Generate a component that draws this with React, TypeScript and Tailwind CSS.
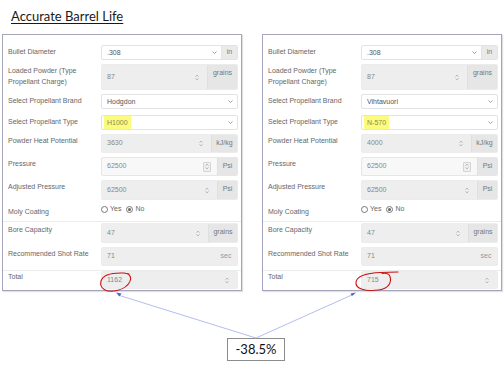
import type { ReactNode } from "react";

type Side = {
  brand: string;
  type: string;
  heat: string;
  total: string;
};

const left: Side = { brand: "Hodgdon", type: "H1000", heat: "3630", total: "1162" };
const right: Side = { brand: "Vihtavuori", type: "N-570", heat: "4000", total: "715" };

function Chevron() {
  return (
    <svg width="5" height="3" viewBox="0 0 5 3" className="shrink-0">
      <path d="M0.5 0.5 L2.5 2.5 L4.5 0.5" fill="none" stroke="#888" strokeWidth="0.8" />
    </svg>
  );
}

function Spinner({ boxed }: { boxed?: boolean }) {
  return (
    <span
      className={
        boxed
          ? "flex h-[10px] w-[8px] shrink-0 items-center justify-center rounded-[1px] border border-[#d4d4d4] bg-[#f0f0f0]"
          : "flex h-[10px] w-[8px] shrink-0 items-center justify-center"
      }
    >
      <svg width="4" height="7" viewBox="0 0 4 7">
        <path
          d="M0.6 2.6 L2 1.1 L3.4 2.6 M0.6 4.4 L2 5.9 L3.4 4.4"
          fill="none"
          stroke="#999"
          strokeWidth="0.7"
        />
      </svg>
    </span>
  );
}

function Row({
  label,
  className,
  labelClass = "pt-[1px]",
  children,
}: {
  label: ReactNode;
  className: string;
  labelClass?: string;
  children: ReactNode;
}) {
  return (
    <div className={`flex ${className}`}>
      <div className={`w-[98px] shrink-0 pl-[5px] pr-[4px] text-[7px] leading-[11px] text-[#666] ${labelClass}`}>
        {label}
      </div>
      <div className="flex-1 pr-[3px]">{children}</div>
    </div>
  );
}

function SelectBox({ value, mark, unit }: { value: string; mark?: boolean; unit?: string }) {
  return (
    <div className="flex h-full overflow-hidden rounded-[2px] border border-[#e3e3e3] bg-white">
      <div className="flex flex-1 items-center pl-[2px] pr-[4px]">
        <span
          className={
            mark
              ? "bg-[#fbfb7e] px-[3px] text-[7px] leading-[13px] text-[#8a8a55]"
              : "px-[3px] text-[7px] leading-[13px] text-[#555]"
          }
        >
          {value}
        </span>
        <span className="ml-auto">
          <Chevron />
        </span>
      </div>
      {unit ? (
        <div className="flex w-[16px] items-center justify-center border-l border-[#e3e3e3] bg-[#eaeaea] text-[7px] text-[#777]">
          {unit}
        </div>
      ) : null}
    </div>
  );
}

function NumberBox({
  value,
  unit,
  unitClass = "w-[20px]",
  light,
  boxed,
  plainUnit,
}: {
  value: string;
  unit?: string;
  unitClass?: string;
  light?: boolean;
  boxed?: boolean;
  plainUnit?: boolean;
}) {
  return (
    <div
      className={
        light
          ? "flex h-full overflow-hidden rounded-[2px] border border-[#e6e6e6] bg-[#f8f8f8]"
          : "flex h-full overflow-hidden rounded-[2px] border border-[#ececec] bg-[#eeeeee]"
      }
    >
      <div className="flex flex-1 items-center pl-[5px] pr-[6px]">
        <span className="text-[7px] text-[#888]">{value}</span>
        {plainUnit ? null : (
          <span className="ml-auto">
            <Spinner boxed={boxed} />
          </span>
        )}
      </div>
      {unit ? (
        <div
          className={
            plainUnit
              ? `${unitClass} flex items-center justify-center text-[7px] text-[#999]`
              : `${unitClass} flex justify-center border-l border-[#e0e0e0] bg-[#e6e6e6] pt-[3px] text-[7px] leading-[9px] text-[#777]`
          }
        >
          {unit}
        </div>
      ) : null}
    </div>
  );
}

function Radio({ checked, text }: { checked?: boolean; text: string }) {
  return (
    <span className="flex items-center gap-[2px]">
      <span className="flex h-[7px] w-[7px] items-center justify-center rounded-full border border-[#777] bg-white">
        {checked ? <span className="h-[3px] w-[3px] rounded-full bg-[#666]" /> : null}
      </span>
      <span className="text-[7px] leading-[10px] text-[#666]">{text}</span>
    </span>
  );
}

function Panel({ side }: { side: Side }) {
  return (
    <div className="h-[257px] w-[240px] border border-[#a4a4bd] bg-white pt-[10px] shadow-[1px_1px_1px_rgba(0,0,0,0.12)]">
      <Row label="Bullet Diameter" className="h-[15px]">
        <SelectBox value=".308" unit="in" />
      </Row>
      <Row label="Loaded Powder (Type Propellant Charge)" className="mt-[4px] h-[26px]">
        <NumberBox value="87" unit="grains" unitClass="w-[30px]" />
      </Row>
      <Row label="Select Propellant Brand" className="mt-[4px] h-[15px]">
        <SelectBox value={side.brand} />
      </Row>
      <Row label="Select Propellant Type" className="mt-[6px] h-[15px]">
        <SelectBox value={side.type} mark />
      </Row>
      <Row label="Powder Heat Potential" className="mt-[4px] h-[19px]">
        <NumberBox value={side.heat} unit="kJ/kg" unitClass="w-[26px]" />
      </Row>
      <Row label="Pressure" className="mt-[4px] h-[19px]">
        <NumberBox value="62500" unit="Psi" light boxed />
      </Row>
      <Row label="Adjusted Pressure" className="mt-[4px] h-[20px]">
        <NumberBox value="62500" unit="Psi" />
      </Row>
      <Row label="Moly Coating" className="h-[21px]" labelClass="pt-[6px]">
        <div className="flex gap-[5px] pt-[4px]">
          <Radio text="Yes" />
          <Radio text="No" checked />
        </div>
      </Row>
      <div className="border-t border-[#ececec] pt-[1px]">
        <Row label="Bore Capacity" className="h-[20px]">
          <NumberBox value="47" unit="grains" unitClass="w-[29px]" />
        </Row>
      </div>
      <Row label="Recommended Shot Rate" className="mt-[4px] h-[19px]">
        <NumberBox value="71" unit="sec" unitClass="w-[22px]" plainUnit />
      </Row>
      <div className="mt-[4px] border-t border-[#ececec]">
        <Row label="Total" className="h-[18px]" labelClass="pt-[0px]">
          <NumberBox value={side.total} />
        </Row>
      </div>
    </div>
  );
}

export default function App() {
  return (
    <div className="relative h-[367px] w-[504px] overflow-hidden bg-white font-['Liberation_Sans',Arial,sans-serif]">
      <div className="h-[34px] pl-[11px] pt-[4px]">
        <span className="font-['Lato',sans-serif] text-[13px] leading-[16px] text-[#1a1a1a] underline decoration-[1px] underline-offset-[2px]">
          Accurate Barrel Life
        </span>
      </div>
      <div className="flex gap-[20px] pl-[2px]">
        <Panel side={left} />
        <Panel side={right} />
      </div>
      <div className="pl-[227px] pt-[47px]">
        <div className="flex h-[23px] w-[58px] items-center justify-center border border-[#8c8c8c] bg-white font-['Lato',sans-serif] text-[13px] text-[#111]">
          -38.5%
        </div>
      </div>
      <svg
        className="pointer-events-none absolute inset-0"
        width="504"
        height="367"
        viewBox="0 0 504 367"
      >
        <line x1="256" y1="338" x2="118" y2="295" stroke="#a9b6ea" strokeWidth="0.9" />
        <line x1="256" y1="338" x2="354" y2="294" stroke="#a9b6ea" strokeWidth="0.9" />
        <polygon points="116,292.5 121.5,293.5 119.5,296.5" fill="#4a66cc" />
        <polygon points="356,292.5 352,296 350.5,293.5" fill="#4a66cc" />
        <path
          d="M127 273.5 C134 276, 131 287, 117 290.5 C107 293, 99 289, 101 281 C103 274.5, 112 272.5, 124 273 L129 274"
          fill="none"
          stroke="#cc1111"
          strokeWidth="1.1"
          strokeLinecap="round"
        />
        <path
          d="M398 272 L381 272.5 C368 273, 357 276, 356 282 C355 289, 366 291.5, 378 290 C388 289, 392 283, 390 276.5 C389 273.5, 385 273, 382 273.5"
          fill="none"
          stroke="#cc1111"
          strokeWidth="1.1"
          strokeLinecap="round"
        />
      </svg>
    </div>
  );
}
